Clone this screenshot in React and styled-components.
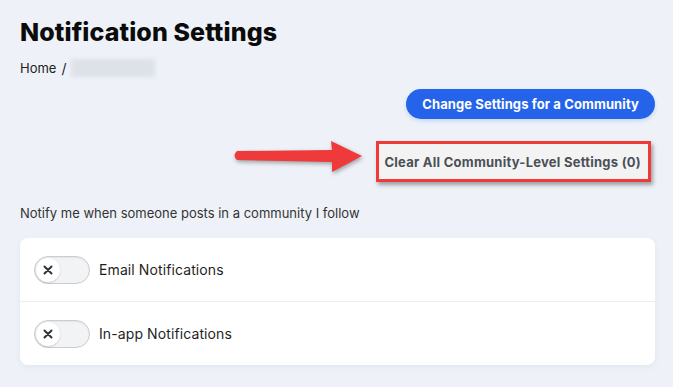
import React from "react";
import styled, { createGlobalStyle } from "styled-components";

const GlobalStyle = createGlobalStyle`
  html, body {
    margin: 0;
    padding: 0;
    background: #eef2f8;
    font-family: Inter, "Noto Sans", sans-serif;
    color: #222;
  }
`

const Page = styled.div`
  position: relative;
  width: 673px;
  height: 387px;
  padding: 16px 18px 0 20px;
  box-sizing: border-box;
  overflow: hidden;
`

const Title = styled.h1`
  margin: 0;
  font-size: 25px;
  font-weight: 800;
  letter-spacing: 0.1px;
  color: #0b0b0b;
  line-height: 32px;
`

const Crumbs = styled.div`
  display: flex;
  align-items: center;
  gap: 5px;
  margin-top: 10px;
  font-size: 13px;
  color: #222;
  height: 20px;

  & .sep {
    font-size: 14px;
  }
`

const Blur = styled.span`
  display: inline-block;
  width: 84px;
  height: 18px;
  background: #dde1e8;
  filter: blur(2px);
`

const Actions = styled.div`
  display: flex;
  flex-direction: column;
  align-items: flex-end;
  margin-top: 11px;
`

const PrimaryButton = styled.button`
  height: 30px;
  padding: 0 16px;
  border: none;
  border-radius: 15px;
  background: #2563eb;
  color: #fff;
  font-family: inherit;
  font-size: 13px;
  font-weight: 700;
  letter-spacing: 0.1px;
  box-shadow: 0 2px 4px rgba(37, 99, 235, 0.2);
`

const Highlight = styled.div`
  margin-top: 22px;
  margin-right: 4px;
  border: 3px solid #f03a3a;
  box-shadow: 2px 3px 4px rgba(0, 0, 0, 0.35);
  background: #f3f3f3;
`

const GhostButton = styled.button`
  display: block;
  height: 35px;
  padding: 0 7px 0 5px;
  border: none;
  background: transparent;
  color: #4a4f57;
  font-family: inherit;
  font-size: 13px;
  font-weight: 700;
  letter-spacing: 0.25px;
`

const Arrow = styled.svg`
  position: absolute;
  left: 230px;
  top: 138px;
  filter: drop-shadow(1px 2px 2px rgba(0, 0, 0, 0.35));
`

const Lead = styled.p`
  margin: 23px 0 0;
  font-size: 13px;
  color: #333;
`

const Card = styled.div`
  margin-top: 17px;
  background: #fff;
  border-radius: 8px;
  box-shadow: 0 2px 6px rgba(30, 50, 90, 0.06);
`

const Row = styled.div`
  display: flex;
  align-items: center;
  gap: 9px;
  height: 63px;
  padding: 0 14px;
  border-top: ${p => (p.first ? "none" : "1px solid #eceef2")};
  font-size: 14px;
  letter-spacing: 0.1px;
  color: #1f1f1f;
`

const Toggle = styled.span`
  position: relative;
  display: inline-flex;
  align-items: center;
  width: 56px;
  height: 28px;
  box-sizing: border-box;
  border: 1px solid #c9ccd1;
  border-radius: 14px;
  background: #f2f3f5;
  box-shadow: inset 0 1px 2px rgba(0, 0, 0, 0.06);
`

const Knob = styled.span`
  display: flex;
  align-items: center;
  justify-content: center;
  width: 24px;
  height: 24px;
  margin-left: 1px;
  border-radius: 50%;
  background: #fff;
  box-shadow: 0 1px 2px rgba(0, 0, 0, 0.15);
`

const Switch = () => (
  <Toggle>
    <Knob>
      <svg width="10" height="10" viewBox="0 0 10 10">
        <path d="M1.5 1.5 L8.5 8.5 M8.5 1.5 L1.5 8.5" stroke="#333" strokeWidth="2" strokeLinecap="round" />
      </svg>
    </Knob>
  </Toggle>
)

const settings = ["Email Notifications", "In-app Notifications"];

const App = () => (
  <>
    <GlobalStyle />
    <Page>
      <Title>Notification Settings</Title>
      <Crumbs>
        <span>Home</span>
        <span className="sep">/</span>
        <Blur />
      </Crumbs>
      <Actions>
        <PrimaryButton>Change Settings for a Community</PrimaryButton>
        <Highlight>
          <GhostButton>Clear All Community-Level Settings (0)</GhostButton>
        </Highlight>
      </Actions>
      <Arrow width="136" height="40" viewBox="0 0 136 40">
        <path d="M7 13 L102 12 L101 3 L132 18 L102 34 L102 24 L7 22 Q2 17.5 7 13 Z" fill="#ee3a3a" />
      </Arrow>
      <Lead>Notify me when someone posts in a community I follow</Lead>
      <Card>
        {settings.map((label, i) => (
          <Row key={label} first={i === 0}>
            <Switch />
            <span>{label}</span>
          </Row>
        ))}
      </Card>
    </Page>
  </>
);

export default App;
